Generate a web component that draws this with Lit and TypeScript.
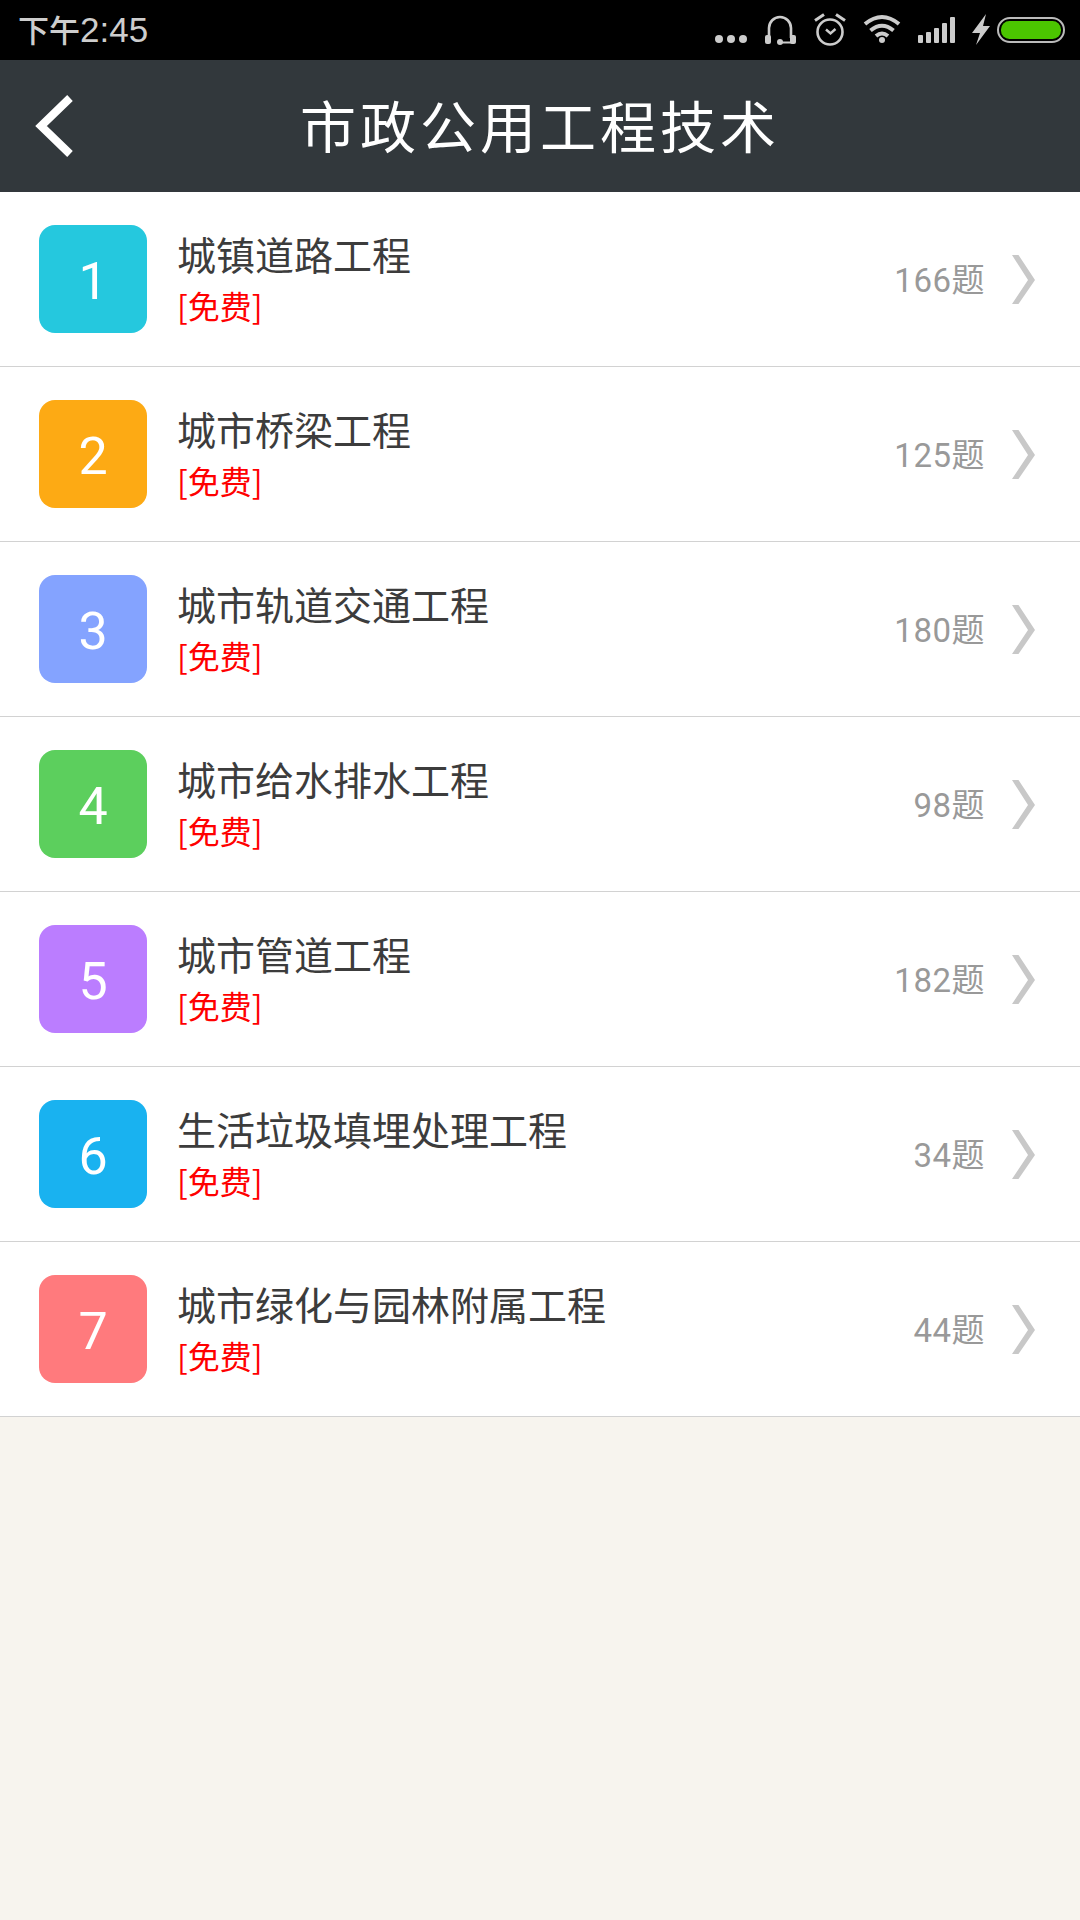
import { LitElement, html, css, svg } from "lit";
import { customElement } from "lit/decorators.js";

const rows = [
  { n: 1, t: "城镇道路工程", c: "166题", color: "#25c8de" },
  { n: 2, t: "城市桥梁工程", c: "125题", color: "#fdaa14" },
  { n: 3, t: "城市轨道交通工程", c: "180题", color: "#84a3ff" },
  { n: 4, t: "城市给水排水工程", c: "98题", color: "#5ccf5d" },
  { n: 5, t: "城市管道工程", c: "182题", color: "#bb7dff" },
  { n: 6, t: "生活垃圾填埋处理工程", c: "34题", color: "#19b2f0" },
  { n: 7, t: "城市绿化与园林附属工程", c: "44题", color: "#ff7a7d" },
];

const icon = (x: number, w: number, body: unknown) => html`<svg class="si" width=${w} height="60" viewBox="${x} 0 ${w} 60">${body}</svg>`;

@customElement("app-root")
export class AppRoot extends LitElement {
  static styles = css`
    :host { display: block; width: 1080px; height: 1920px; background: #f7f4ee; font-family: Roboto, "Noto Sans CJK SC", sans-serif; overflow: hidden; }
    .status { height: 60px; background: #000; display: flex; align-items: center; padding: 0 13px 0 18px; box-sizing: border-box; }
    .time { font-family: "Liberation Sans", "Noto Sans CJK SC", sans-serif; font-size: 35px; color: #cdcdcd; flex: 1; padding-bottom: 3px; }
    .time span { font-size: 31px; font-weight: 500; }
    .icons { display: flex; gap: 10px; }
    .si { display: block; }
    .batt { margin-left: -10px; }
    .bar { height: 132px; background: #32383c; display: flex; align-items: center; justify-content: center; position: relative; padding-bottom: 6px; box-sizing: border-box; }
    .back { position: absolute; left: 30px; top: 30px; }
    .title { font-size: 56px; color: #fff; letter-spacing: 4px; font-family: "Noto Sans CJK SC", sans-serif; font-weight: 400; }
    .row { height: 175px; box-sizing: border-box; background: #fff; border-bottom: 1px solid #d2d2d2; display: flex; align-items: center; padding: 0 44px 0 39px; }
    .badge { width: 108px; height: 108px; border-radius: 16px; color: #fff; font-size: 52px; display: flex; align-items: center; justify-content: center; font-weight: 400; padding-top: 4px; box-sizing: border-box; }
    .text { margin-left: 30px; flex: 1; display: flex; flex-direction: column; font-family: "Noto Sans CJK SC", sans-serif; }
    .name { font-size: 39px; line-height: 52px; color: #3c3c3c; letter-spacing: 0; }
    .free { font-size: 32px; line-height: 52px; color: #ff0000; }
    .count { font-size: 33px; color: #999; margin-right: 26px; letter-spacing: 0.5px; padding-bottom: 2px; }
  `;

  render() {
    return html`
      <div class="status">
        <div class="time"><span>下午</span>2:45</div>
        <div class="icons">
          ${icon(712, 38, svg`<g fill="#ccc"><circle cx="719" cy="39" r="4"/><circle cx="731" cy="39" r="4"/><circle cx="743" cy="39" r="4"/></g>`)}
          ${icon(760, 40, svg`<path d="M769 38V28a11 11 0 0 1 22 0V38" fill="none" stroke="#ccc" stroke-width="2.6"/><rect x="765" y="35" width="6" height="9" rx="2" fill="#ccc"/><rect x="790" y="35" width="6" height="9" rx="2" fill="#ccc"/><circle cx="780" cy="42" r="3" fill="#ccc"/><path d="M780 42.5H793" stroke="#ccc" stroke-width="2"/>`)}
          ${icon(810, 40, svg`<g fill="none" stroke="#ccc"><circle cx="830" cy="32" r="12.5" stroke-width="2.6"/><path d="M826 29.500l4.500 4 5-4.500" stroke-width="2.400"/><path d="M815 20.500l9-6M836 14.500l9 6" stroke-width="3"/></g>`)}
          ${icon(860, 45, svg`<g fill="none" stroke="#ccc" stroke-width="4"><path d="M865 24Q882 10 899 24"/><path d="M870.500 30.500Q882 21 893.500 30.500"/><path d="M876 36Q882 31 888 36"/></g><circle cx="882" cy="40" r="3" fill="#ccc"/>`)}
          ${icon(915, 45, svg`<g fill="#ccc"><rect x="918" y="35" width="5" height="8" rx="1"/><rect x="926" y="32" width="5" height="11" rx="1"/><rect x="934" y="28" width="5" height="15" rx="1"/><rect x="942" y="23" width="5" height="20" rx="1"/><rect x="950" y="17" width="5" height="26" rx="1"/></g>`)}
          ${icon(970, 25, svg`<polygon points="986,14 972,33 980,33 976,45 990,26 983,26" fill="#ccc"/>`)}
          <div class="batt">${icon(995, 72, svg`<rect x="998" y="18" width="66" height="24" rx="12" fill="none" stroke="#bbb" stroke-width="2"/><rect x="1001" y="21" width="60" height="18" rx="8.500" fill="#4bc500"/>`)}</div>
        </div>
      </div>
      <div class="bar">
        <svg class="back" width="46" height="72" viewBox="30 90 46 72"><path d="M70 98L41 126L70 154" fill="none" stroke="#fff" stroke-width="8"/></svg>
        <div class="title">市政公用工程技术</div>
      </div>
      ${rows.map(r => html`
        <div class="row">
          <div class="badge" style="background:${r.color}">${r.n}</div>
          <div class="text">
            <div class="name">${r.t}</div>
            <div class="free">[免费]</div>
          </div>
          <div class="count">${r.c}</div>
          <svg width="25" height="49" viewBox="0 0 25 49"><polygon points="1,0 7.5,0 24,25 7.5,49 1,49 17,25" fill="#c8c8c8"/></svg>
        </div>`)}
    `;
  }
}
